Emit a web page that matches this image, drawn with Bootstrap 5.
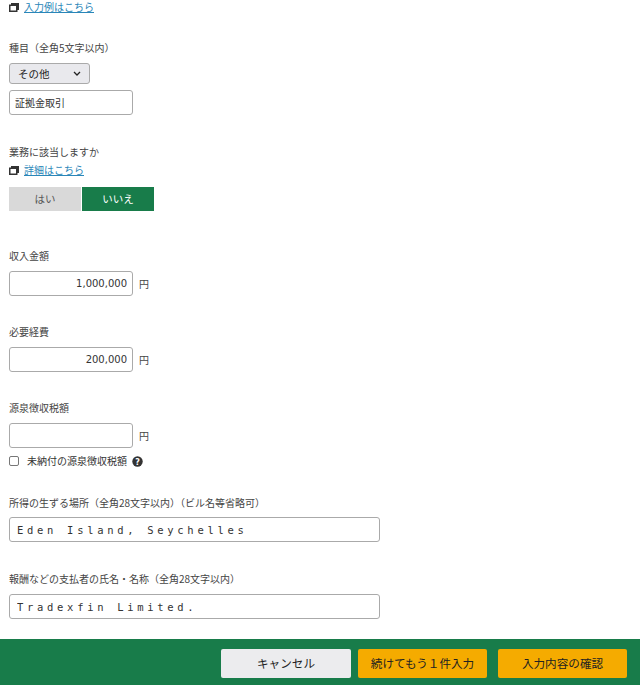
<!DOCTYPE html>
<html lang="ja">
<head>
<meta charset="utf-8">
<title>入力</title>
<link rel="stylesheet" href="https://cdn.jsdelivr.net/npm/bootstrap@5.3.0/dist/css/bootstrap.min.css">
<style>
html,body{height:685px;overflow:hidden}
body{font-family:"Noto Sans CJK JP","DejaVu Sans",sans-serif;font-size:10px;line-height:14px;color:#333;background:#fff}
.pg{height:639px;padding:0 9px;overflow:hidden}
.lnk{display:flex;align-items:center;gap:5px;height:14px}
.lnk a{color:#2a86b8;font-size:10px}
.lnk svg{flex:none}
.lab{display:block;height:14px;margin:0;font-size:10px;color:#444}
.fld{display:block;height:25px;border:1px solid #aaa;border-radius:3px;background:#fff;font-family:"DejaVu Sans",sans-serif;font-size:10px;color:#333;padding:0 5px 0 4px;box-shadow:none}
.w1{width:124px}
.w2{width:371px;padding-left:7px;font-family:"DejaVu Sans Mono",monospace;font-size:10.5px;letter-spacing:3.7px}
.num{text-align:right}
.jp{font-family:"Noto Sans CJK JP",sans-serif;font-size:10px;padding-left:5px}
.sel{width:81px;height:21px;margin-top:8px;border:1px solid #aaa;border-radius:3px;background:#e9e9ed;font-size:10.5px;color:#222;padding:0 8px;display:flex;align-items:center;justify-content:space-between}
.yen{font-size:10px;margin-left:6px;color:#444}
.tog{display:flex;gap:1px;margin-top:10px}
.tog span{width:72px;height:24px;display:flex;align-items:center;justify-content:center;font-size:10.5px}
.t-no{background:#d9d9d9;color:#555}
.t-yes{background:#187c4a;color:#fff}
.chk{display:flex;align-items:center;height:14px;margin-top:6px}
.box{width:10px;height:10px;border:1px solid #777;border-radius:2px;margin-right:8px;background:#fff}
.chk svg{margin-left:5px}
.foot{height:46px;background:#187c4a;display:flex;justify-content:flex-end;align-items:flex-start;padding:10px 13px 0 0}
.fb{height:29px;border-radius:2px;font-size:11.6px;border:0;padding:0;display:flex;align-items:center;justify-content:center;color:#222}
.fb-c{width:130px;background:#ececee;margin-right:7px}
.fb-o{background:#f5ab00}
.fb-m{width:129px;margin-right:11px}
.fb-l{width:129px}
.g-a{margin-top:27px}.g-b{margin-top:6px}.g-c{margin-top:30px}.g-d{margin-top:4px}
.g-e{margin-top:38px}.g-f{margin-top:29px}.g-g{margin-top:28px}.g-h{margin-top:7px}
.g-i{margin-top:8px}
</style>
</head>
<body>
<div class="pg">
  <div class="lnk"><svg width="10" height="9" viewBox="0 0 10 9"><rect x="2" y="0" width="8" height="7" fill="#333"/><rect x=".75" y="2.25" width="7" height="6" fill="#fff" stroke="#333" stroke-width="1.5"/></svg><a href="#">入力例はこちら</a></div>
  <label class="lab g-a">種目（全角5文字以内）</label>
  <div class="sel"><span>その他</span><svg width="8" height="5" viewBox="0 0 8 5"><path d="M1 1l3 3 3-3" fill="none" stroke="#222" stroke-width="1.3"/></svg></div>
  <input class="fld w1 jp g-b" value="証拠金取引">
  <label class="lab g-c">業務に該当しますか</label>
  <div class="lnk g-d"><svg width="10" height="9" viewBox="0 0 10 9"><rect x="2" y="0" width="8" height="7" fill="#333"/><rect x=".75" y="2.25" width="7" height="6" fill="#fff" stroke="#333" stroke-width="1.5"/></svg><a href="#">詳細はこちら</a></div>
  <div class="tog"><span class="t-no">はい</span><span class="t-yes">いいえ</span></div>
  <label class="lab g-e">収入金額</label>
  <div class="d-flex align-items-center g-i"><input class="fld w1 num" value="1,000,000"><span class="yen">円</span></div>
  <label class="lab g-f">必要経費</label>
  <div class="d-flex align-items-center g-i"><input class="fld w1 num" value="200,000"><span class="yen">円</span></div>
  <label class="lab g-f">源泉徴収税額</label>
  <div class="d-flex align-items-center g-i"><input class="fld w1 num" value=""><span class="yen">円</span></div>
  <div class="chk"><span class="box"></span><span>未納付の源泉徴収税額</span><svg width="11" height="11" viewBox="0 0 11 11"><circle cx="5.5" cy="5.5" r="5.2" fill="#333"/><text x="5.5" y="8.5" font-size="8" font-weight="700" fill="#fff" text-anchor="middle" font-family="DejaVu Sans">?</text></svg></div>
  <label class="lab g-g">所得の生ずる場所（全角28文字以内）（ビル名等省略可）</label>
  <input class="fld w2 g-h" value="Eden Island, Seychelles">
  <label class="lab g-c">報酬などの支払者の氏名・名称（全角28文字以内）</label>
  <input class="fld w2 g-i" value="Tradexfin Limited.">
</div>
<div class="foot">
  <button class="btn fb fb-c">キャンセル</button>
  <button class="btn fb fb-o fb-m">続けてもう１件入力</button>
  <button class="btn fb fb-o fb-l">入力内容の確認</button>
</div>
<script src="https://cdn.jsdelivr.net/npm/bootstrap@5.3.0/dist/js/bootstrap.bundle.min.js"></script>
</body>
</html>
